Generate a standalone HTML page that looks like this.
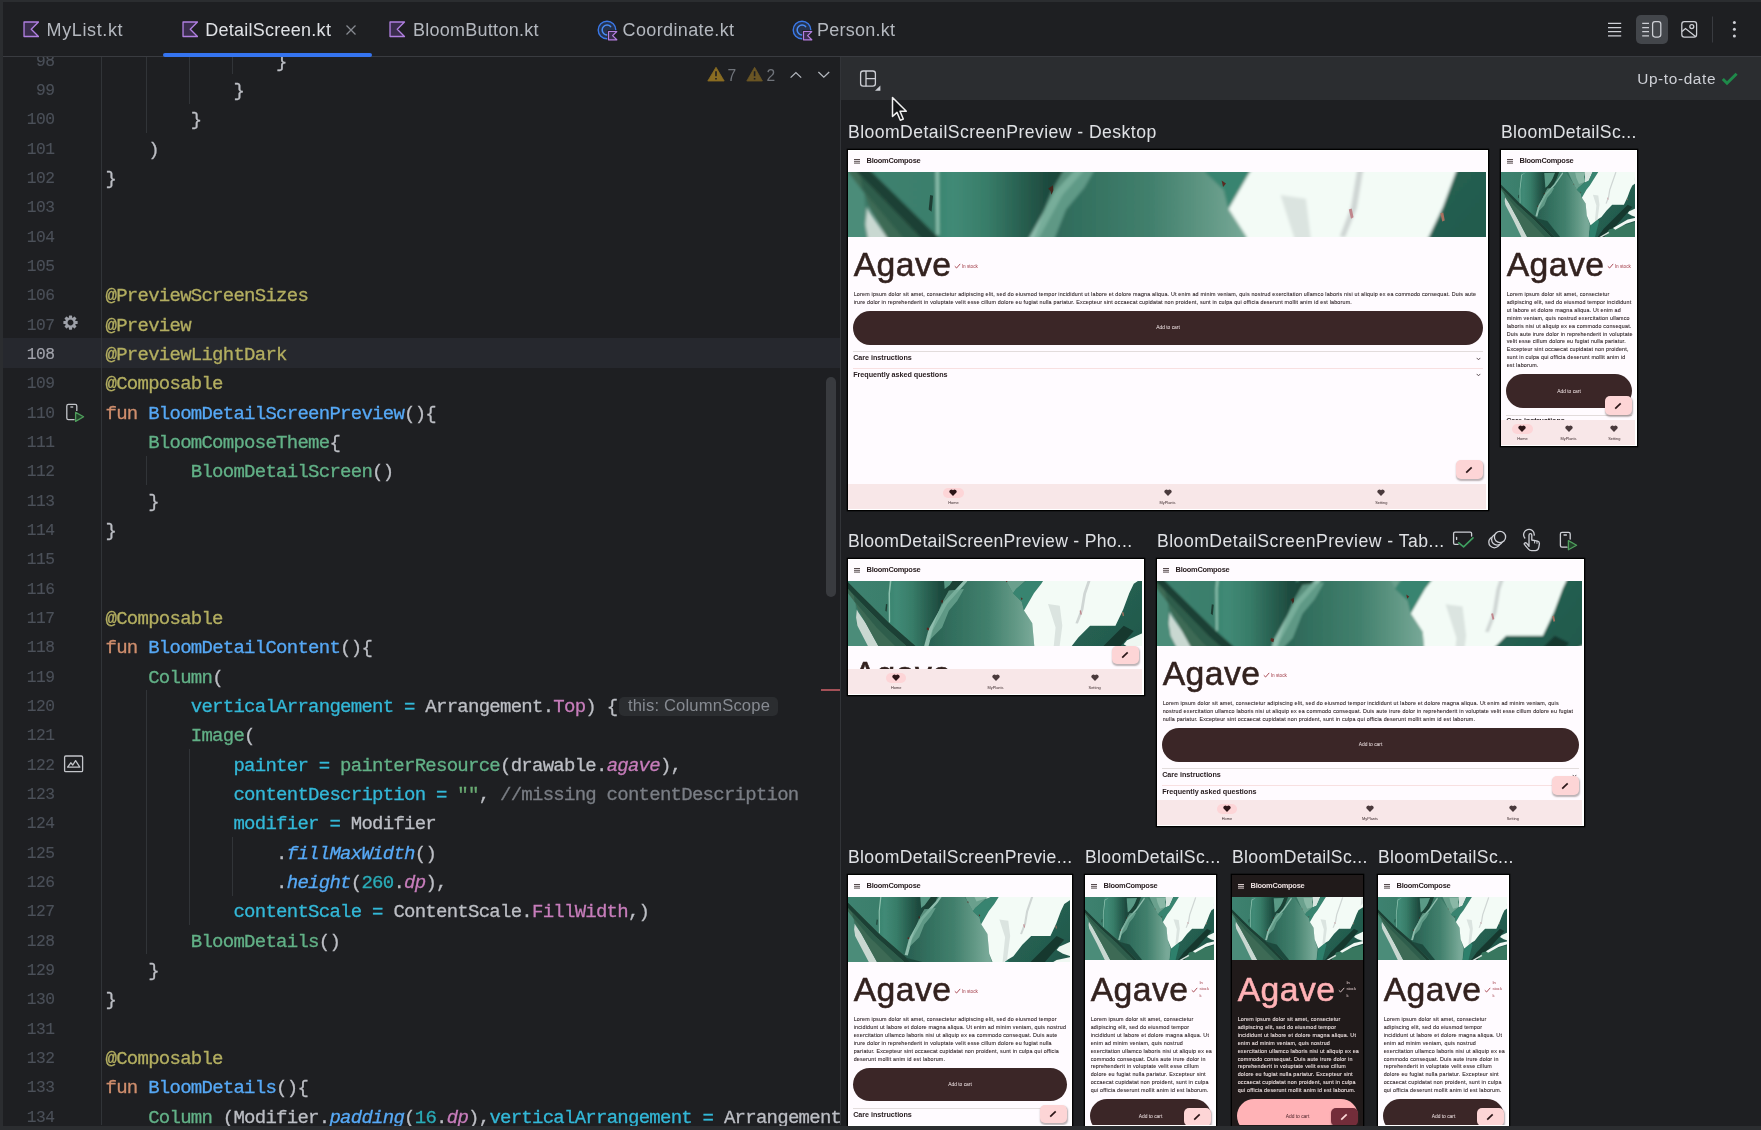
<!DOCTYPE html>
<html><head><meta charset="utf-8"><title>DetailScreen.kt</title>
<style>
html,body{margin:0;padding:0;background:#1e1f22}
#root{will-change:transform;position:relative;width:1761px;height:1130px;overflow:hidden;background:#1e1f22;font-family:"Liberation Sans",sans-serif}
.plab{position:absolute;font-family:"Liberation Sans",sans-serif;font-size:17.6px;letter-spacing:0.41px;color:#dfe1e5;white-space:pre;line-height:22px;margin-top:0.8px}

.ln{position:absolute;left:0;width:54.4px;height:29.33px;line-height:29.33px;text-align:right;font-family:"Liberation Mono",monospace;font-size:17px;letter-spacing:-0.6px;white-space:pre;padding-top:1.8px;-webkit-text-stroke:0.15px;box-sizing:border-box;transform:scaleX(0.955);transform-origin:100% 50%}
.cl{position:absolute;left:105.5px;height:29.33px;line-height:29.33px;font-family:"Liberation Mono",monospace;font-size:19px;letter-spacing:-0.74px;white-space:pre;color:#bcbec4;padding-top:2.7px;-webkit-text-stroke:0.3px;box-sizing:border-box}
.hint{display:inline-block;-webkit-text-stroke:0;font-family:"Liberation Sans",sans-serif;font-size:16.6px;letter-spacing:0.17px;line-height:18.4px;height:18.2px;color:#868a91;background:#2b2d30;border-radius:5px;padding:0 8.2px 0 9.2px;margin-left:1.4px;position:relative;top:-0.6px;vertical-align:baseline}

.tab{position:absolute;top:18.5px;font-family:"Liberation Sans",sans-serif;font-size:18px;letter-spacing:0.26px;white-space:pre;line-height:22px}
.ui{position:absolute;font-family:"Liberation Sans",sans-serif;white-space:pre;line-height:1.2}

.pv{position:absolute;font-family:"Liberation Sans",sans-serif;white-space:pre;line-height:1.2}

</style></head><body>
<div id="root">
<svg width="0" height="0" style="position:absolute"><defs>
<filter id="ab" x="-5%" y="-5%" width="110%" height="110%"><feGaussianBlur stdDeviation="4.5"/></filter>
<filter id="ab2" x="-20%" y="-20%" width="140%" height="140%"><feGaussianBlur stdDeviation="22"/></filter>
<linearGradient id="gA" x1="0" x2="1" y1="0" y2="0"><stop offset="0" stop-color="#3d8270"/><stop offset="1" stop-color="#3a7d6a"/></linearGradient>
<linearGradient id="gB" gradientUnits="userSpaceOnUse" x1="246" x2="600" y1="0" y2="0"><stop offset="0" stop-color="#3a8570"/><stop offset="0.12" stop-color="#418a76"/><stop offset="0.38" stop-color="#387d69"/><stop offset="0.62" stop-color="#2a6353"/><stop offset="0.85" stop-color="#1e4b3f"/><stop offset="1" stop-color="#1b4438"/></linearGradient>
<linearGradient id="gD" gradientUnits="userSpaceOnUse" x1="440" x2="1100" y1="0" y2="0"><stop offset="0" stop-color="#295e50"/><stop offset="0.3" stop-color="#33705f"/><stop offset="0.6" stop-color="#42806d"/><stop offset="0.82" stop-color="#5f9683"/><stop offset="1" stop-color="#78a998"/></linearGradient>
<linearGradient id="gF" x1="0" x2="1" y1="0" y2="1"><stop offset="0" stop-color="#2a6a5a"/><stop offset="1" stop-color="#1f5246"/></linearGradient>
<g id="agaveG">
 <rect x="-20" y="-60" width="1801" height="1240" fill="#3b7866"/>
 <g filter="url(#ab)">
  <!-- leaf A upper-left -->
  <path d="M-20 -60 H330 L255 300 L244 496 L246 674 L66 497 L0 430 L-20 410 Z" fill="url(#gA)"/>
  <!-- far-left lower green -->
  <path d="M-20 440 L45 555 L51 675 L165 900 L270 1120 L300 1190 H-20 Z" fill="#4b8c79"/>
  <!-- whitish streak -->
  <path d="M52 592 L62 610 L106 675 L230 900 L345 1120 L380 1190 H300 L270 1120 L165 900 L56 690 L48 640 Z" fill="#c9d8d1"/>
  <!-- leaf B -->
  <path d="M330 -60 H800 L690 420 L570 550 L480 710 L440 850 L246 674 L244 496 L255 300 Z" fill="url(#gB)"/>
  <path d="M560 280 L700 275 L640 420 L575 470 Z" fill="#5a9a86"/>
  <!-- dark gap -->
  <path d="M720 200 L775 200 L715 370 L650 450 L572 545 L610 440 L690 330 Z" fill="#1a4236"/>
  <!-- central leaf D -->
  <path d="M800 200 Q830 240 840 271 L940 420 L982 496 L1034 546 L1047 598 L1096 674 L1110 830 L1150 950 L1130 1180 H740 L700 1114 L440 850 L480 710 L570 550 L690 420 Z" fill="url(#gD)"/>
  <!-- ridge highlight -->
  <path d="M795 270 L690 420 L570 550 L480 710 L445 840 L470 845 L505 715 L590 560 L705 430 L805 285 Z" fill="#8fbdad"/>
  <path d="M600 480 L561 549 L545 588 L514 674 L480 780 L560 700 L600 600 L650 540 L690 470 Z" fill="#6fa894" opacity="0.75"/>
  <!-- leaf E / sage -->
  <path d="M840 200 H1090 L1075 330 L1090 390 L1000 470 L982 496 L940 420 Z" fill="#6aa08d"/>
  <path d="M960 271 H1085 L1075 330 L1085 395 L1010 420 L975 340 Z" fill="#8ab8a6"/>
  <!-- white upper-left piece -->
  <path d="M1078 200 H1215 L1135 380 L1088 400 L1088 330 Z" fill="#d9e6e0"/>
  <!-- teal gap -->
  <path d="M1215 200 L1300 200 L1150 440 L1106 496 L1047 598 L1034 546 L982 496 L1000 470 L1088 400 L1135 380 Z" fill="#388470"/>
  <!-- dark band (leaf C) -->
  <path d="M-20 410 L0 430 L66 497 L246 674 L470 870 L700 1114 L770 1190 H345 L345 1120 L230 900 L106 675 L56 584 L45 555 L-20 470 Z" fill="#3c6a55"/>
  <path d="M-20 410 L0 430 L66 497 L246 674 L470 870 L700 1114 L770 1190 H725 L655 1114 L432 886 L212 690 L34 506 L-20 448 Z" fill="#1b4034"/>
  <path d="M212 690 L432 886 L655 1114 L725 1190 H640 L575 1114 L370 900 L170 700 L40 545 L34 506 Z" fill="#2f5d4b"/>
  <path d="M450 860 L600 900 L760 1100 L800 1180 H740 L700 1114 Z" fill="#1f4a3e"/>
  <!-- right dark region F -->
  <path d="M1781 385 L1700 440 L1673 496 L1637 593 L1591 690 L1440 690 L1370 760 L1300 850 L1250 880 L1160 955 L1130 1180 H1781 Z" fill="url(#gF)"/>
  <path d="M1160 955 L1250 880 L1270 900 L1200 1180 H1130 Z" fill="#2d806c"/>
  <path d="M1640 690 L1700 720 L1300 1180 H1200 L1330 1000 Z" fill="#16382f"/>
  <path d="M1400 1010 L1781 900 V1180 H1290 Z" fill="#38775f"/>
  <!-- white main leaf -->
  <path d="M1300 200 H1781 V385 L1700 440 L1673 496 L1637 593 L1591 690 L1440 690 L1370 760 L1300 850 L1250 880 L1160 955 L1110 830 L1096 674 L1047 598 L1106 496 L1150 440 Z" fill="#f3fbf6"/>
  <path d="M1190 560 L1260 570 L1275 690 L1250 880 L1215 900 L1235 700 Z" fill="#dbe4e0"/>
  <path d="M1480 265 L1400 496 L1384 593 L1353 674 L1368 676 L1400 596 L1416 500 L1496 268 Z" fill="#cfd6d4"/>
  <path d="M1740 271 L1781 271 V330 L1730 380 Z" fill="#d9dfdd"/>
  <!-- small white highlights lower right -->
  <path d="M1781 720 L1660 775 L1640 800 L1690 830 L1781 860 Z" fill="#eef7f1"/>
  <path d="M1781 850 L1640 880 L1450 990 L1480 1012 L1620 935 L1781 885 Z" fill="#f0f8f3"/>
  <path d="M1390 1040 L1270 1110 L1290 1118 L1402 1056 Z" fill="#cfe0d8"/>
  <!-- thin light edge A/B -->
  <path d="M322 271 L262 300 L241 496 L243 670 L251 670 L250 496 L272 305 Z" fill="#8fc2b0"/>
 </g>
 <!-- spines -->
 <g fill="#5a2a22">
  <path d="M551 542 l13 -9 l1 14 l-5 12 l-3 -10 z" fill="#43251c"/><path d="M470 700 l13 3 l-3 14 l-12 -5 z"/>
  <path d="M226 560 l8 2 l-4 44 l-8 -6 z" fill="#1e3d33"/>
  <path d="M1028 520 l12 8 l-8 10 z"/><path d="M940 415 l10 10 l-10 6 z"/>
  <path d="M1378 600 l8 -3 l5 24 l-7 4 z" fill="#c0868c"/><path d="M1630 610 l8 -2 l4 22 l-7 3 z" fill="#a8705f"/>
 </g>
</g>
</defs></svg>
<div id="editor" style="position:absolute;left:0;top:57px;width:840px;height:1069px;overflow:hidden"><div style="position:absolute;left:0;top:-57px;width:840px;height:1130px">
<div style="position:absolute;left:3px;top:338.30px;width:837px;height:29.33px;background:#26282e"></div>
<div style="position:absolute;left:101px;top:57px;width:1px;height:1068px;background:#313438"></div>
<div style="position:absolute;left:146.3px;top:57.00px;width:1px;height:75.99px;background:#313438"></div>
<div style="position:absolute;left:188.9px;top:57.00px;width:1px;height:46.66px;background:#313438"></div>
<div style="position:absolute;left:231.6px;top:57.00px;width:1px;height:17.33px;background:#313438"></div>
<div style="position:absolute;left:146.3px;top:455.62px;width:1px;height:29.33px;background:#313438"></div>
<div style="position:absolute;left:146.3px;top:690.26px;width:1px;height:263.97px;background:#313438"></div>
<div style="position:absolute;left:188.9px;top:748.92px;width:1px;height:175.98px;background:#313438"></div>
<div style="position:absolute;left:231.6px;top:836.91px;width:1px;height:58.66px;background:#313438"></div>
<div class="ln" style="top:45.00px;color:#4b5059">98</div>
<div class="cl" style="top:45.00px"><span style="color:#bcbec4">                }</span></div>
<div class="ln" style="top:74.33px;color:#4b5059">99</div>
<div class="cl" style="top:74.33px"><span style="color:#bcbec4">            }</span></div>
<div class="ln" style="top:103.66px;color:#4b5059">100</div>
<div class="cl" style="top:103.66px"><span style="color:#bcbec4">        }</span></div>
<div class="ln" style="top:132.99px;color:#4b5059">101</div>
<div class="cl" style="top:132.99px"><span style="color:#bcbec4">    )</span></div>
<div class="ln" style="top:162.32px;color:#4b5059">102</div>
<div class="cl" style="top:162.32px"><span style="color:#bcbec4">}</span></div>
<div class="ln" style="top:191.65px;color:#4b5059">103</div>
<div class="ln" style="top:220.98px;color:#4b5059">104</div>
<div class="ln" style="top:250.31px;color:#4b5059">105</div>
<div class="ln" style="top:279.64px;color:#4b5059">106</div>
<div class="cl" style="top:279.64px"><span style="color:#b3ae60">@PreviewScreenSizes</span></div>
<div class="ln" style="top:308.97px;color:#4b5059">107</div>
<div class="cl" style="top:308.97px"><span style="color:#b3ae60">@Preview</span></div>
<div class="ln" style="top:338.30px;color:#a1a3ab">108</div>
<div class="cl" style="top:338.30px"><span style="color:#b3ae60">@PreviewLightDark</span></div>
<div class="ln" style="top:367.63px;color:#4b5059">109</div>
<div class="cl" style="top:367.63px"><span style="color:#b3ae60">@Composable</span></div>
<div class="ln" style="top:396.96px;color:#4b5059">110</div>
<div class="cl" style="top:396.96px"><span style="color:#cf8e6d">fun </span><span style="color:#56a8f5">BloomDetailScreenPreview</span><span style="color:#bcbec4">(){</span></div>
<div class="ln" style="top:426.29px;color:#4b5059">111</div>
<div class="cl" style="top:426.29px"><span style="color:#62b187">    BloomComposeTheme</span><span style="color:#bcbec4">{</span></div>
<div class="ln" style="top:455.62px;color:#4b5059">112</div>
<div class="cl" style="top:455.62px"><span style="color:#62b187">        BloomDetailScreen</span><span style="color:#bcbec4">()</span></div>
<div class="ln" style="top:484.95px;color:#4b5059">113</div>
<div class="cl" style="top:484.95px"><span style="color:#bcbec4">    }</span></div>
<div class="ln" style="top:514.28px;color:#4b5059">114</div>
<div class="cl" style="top:514.28px"><span style="color:#bcbec4">}</span></div>
<div class="ln" style="top:543.61px;color:#4b5059">115</div>
<div class="ln" style="top:572.94px;color:#4b5059">116</div>
<div class="ln" style="top:602.27px;color:#4b5059">117</div>
<div class="cl" style="top:602.27px"><span style="color:#b3ae60">@Composable</span></div>
<div class="ln" style="top:631.60px;color:#4b5059">118</div>
<div class="cl" style="top:631.60px"><span style="color:#cf8e6d">fun </span><span style="color:#56a8f5">BloomDetailContent</span><span style="color:#bcbec4">(){</span></div>
<div class="ln" style="top:660.93px;color:#4b5059">119</div>
<div class="cl" style="top:660.93px"><span style="color:#62b187">    Column</span><span style="color:#bcbec4">(</span></div>
<div class="ln" style="top:690.26px;color:#4b5059">120</div>
<div class="cl" style="top:690.26px"><span style="color:#33b8d8">        verticalArrangement = </span><span style="color:#bcbec4">Arrangement.</span><span style="color:#c77dbb">Top</span><span style="color:#bcbec4">) {</span><span class="hint">this: ColumnScope</span></div>
<div class="ln" style="top:719.59px;color:#4b5059">121</div>
<div class="cl" style="top:719.59px"><span style="color:#62b187">        Image</span><span style="color:#bcbec4">(</span></div>
<div class="ln" style="top:748.92px;color:#4b5059">122</div>
<div class="cl" style="top:748.92px"><span style="color:#33b8d8">            painter = </span><span style="color:#62b187">painterResource</span><span style="color:#bcbec4">(drawable.</span><span style="color:#c77dbb;font-style:italic">agave</span><span style="color:#bcbec4">),</span></div>
<div class="ln" style="top:778.25px;color:#4b5059">123</div>
<div class="cl" style="top:778.25px"><span style="color:#33b8d8">            contentDescription = </span><span style="color:#6aab73">&quot;&quot;</span><span style="color:#bcbec4">, </span><span style="color:#7a7e85">//missing contentDescription</span></div>
<div class="ln" style="top:807.58px;color:#4b5059">124</div>
<div class="cl" style="top:807.58px"><span style="color:#33b8d8">            modifier = </span><span style="color:#bcbec4">Modifier</span></div>
<div class="ln" style="top:836.91px;color:#4b5059">125</div>
<div class="cl" style="top:836.91px"><span style="color:#bcbec4">                .</span><span style="color:#57aaf7;font-style:italic">fillMaxWidth</span><span style="color:#bcbec4">()</span></div>
<div class="ln" style="top:866.24px;color:#4b5059">126</div>
<div class="cl" style="top:866.24px"><span style="color:#bcbec4">                .</span><span style="color:#57aaf7;font-style:italic">height</span><span style="color:#bcbec4">(</span><span style="color:#2aacb8">260</span><span style="color:#bcbec4">.</span><span style="color:#c77dbb;font-style:italic">dp</span><span style="color:#bcbec4">),</span></div>
<div class="ln" style="top:895.57px;color:#4b5059">127</div>
<div class="cl" style="top:895.57px"><span style="color:#33b8d8">            contentScale = </span><span style="color:#bcbec4">ContentScale.</span><span style="color:#c77dbb">FillWidth</span><span style="color:#bcbec4">,)</span></div>
<div class="ln" style="top:924.90px;color:#4b5059">128</div>
<div class="cl" style="top:924.90px"><span style="color:#62b187">        BloomDetails</span><span style="color:#bcbec4">()</span></div>
<div class="ln" style="top:954.23px;color:#4b5059">129</div>
<div class="cl" style="top:954.23px"><span style="color:#bcbec4">    }</span></div>
<div class="ln" style="top:983.56px;color:#4b5059">130</div>
<div class="cl" style="top:983.56px"><span style="color:#bcbec4">}</span></div>
<div class="ln" style="top:1012.89px;color:#4b5059">131</div>
<div class="ln" style="top:1042.22px;color:#4b5059">132</div>
<div class="cl" style="top:1042.22px"><span style="color:#b3ae60">@Composable</span></div>
<div class="ln" style="top:1071.55px;color:#4b5059">133</div>
<div class="cl" style="top:1071.55px"><span style="color:#cf8e6d">fun </span><span style="color:#56a8f5">BloomDetails</span><span style="color:#bcbec4">(){</span></div>
<div class="ln" style="top:1100.88px;color:#4b5059">134</div>
<div class="cl" style="top:1100.88px"><span style="color:#62b187">    Column </span><span style="color:#bcbec4">(Modifier.</span><span style="color:#57aaf7;font-style:italic">padding</span><span style="color:#bcbec4">(</span><span style="color:#2aacb8">16</span><span style="color:#bcbec4">.</span><span style="color:#c77dbb;font-style:italic">dp</span><span style="color:#bcbec4">),</span><span style="color:#33b8d8">verticalArrangement = </span><span style="color:#bcbec4">Arrangement</span></div>
</div></div>
<div style="position:absolute;left:0;top:0;width:1761px;height:2px;background:#2b2d30"></div>
<div style="position:absolute;left:0;top:0;width:3px;height:1130px;background:#2b2d30"></div>
<div style="position:absolute;left:0;top:1125.7px;width:1761px;height:4.3px;background:#2b2d30;z-index:50"></div>
<div style="position:absolute;left:3px;top:56px;width:1758px;height:1px;background:#393b40"></div>
<svg style="position:absolute;left:22.5px;top:21px" width="16.5" height="16.5" viewBox="0 0 16 16"><path d="M1 1 H15 L8 8 L15 15 H1 Z" fill="#3a2d4d" stroke="#b07fe0" stroke-width="1.3" stroke-linejoin="round"/></svg>
<div class="tab" style="left:46.6px;color:#b4b8bf;letter-spacing:0.62px">MyList.kt</div>
<svg style="position:absolute;left:181.5px;top:21px" width="16.5" height="16.5" viewBox="0 0 16 16"><path d="M1 1 H15 L8 8 L15 15 H1 Z" fill="#3a2d4d" stroke="#b07fe0" stroke-width="1.3" stroke-linejoin="round"/></svg>
<div class="tab" style="left:205.2px;color:#dfe1e5;letter-spacing:0.26px">DetailScreen.kt</div>
<svg style="position:absolute;left:389px;top:21px" width="16.5" height="16.5" viewBox="0 0 16 16"><path d="M1 1 H15 L8 8 L15 15 H1 Z" fill="#3a2d4d" stroke="#b07fe0" stroke-width="1.3" stroke-linejoin="round"/></svg>
<div class="tab" style="left:413px;color:#b4b8bf;letter-spacing:0.26px">BloomButton.kt</div>
<svg style="position:absolute;left:597px;top:19.6px" width="22" height="22" viewBox="0 0 22 22"><circle cx="10" cy="10" r="8.8" fill="#25324d" stroke="#3a78e8" stroke-width="1.4"/><path d="M13.6 6.6 A4.9 4.9 0 1 0 13.6 13.4" fill="none" stroke="#4a8cf5" stroke-width="1.5" stroke-linecap="round"/><rect x="10.2" y="10.2" width="11" height="11" fill="#1e1f22"/><path d="M11.5 11.5 H19.8 L15.6 15.65 L19.8 19.8 H11.5 Z" fill="#3a2d4d" stroke="#b57fe0" stroke-width="1.2" stroke-linejoin="round"/></svg>
<div class="tab" style="left:622.5px;color:#b4b8bf;letter-spacing:0.38px">Coordinate.kt</div>
<svg style="position:absolute;left:791.5px;top:19.6px" width="22" height="22" viewBox="0 0 22 22"><circle cx="10" cy="10" r="8.8" fill="#25324d" stroke="#3a78e8" stroke-width="1.4"/><path d="M13.6 6.6 A4.9 4.9 0 1 0 13.6 13.4" fill="none" stroke="#4a8cf5" stroke-width="1.5" stroke-linecap="round"/><rect x="10.2" y="10.2" width="11" height="11" fill="#1e1f22"/><path d="M11.5 11.5 H19.8 L15.6 15.65 L19.8 19.8 H11.5 Z" fill="#3a2d4d" stroke="#b57fe0" stroke-width="1.2" stroke-linejoin="round"/></svg>
<div class="tab" style="left:817px;color:#b4b8bf;letter-spacing:0.26px">Person.kt</div>
<svg style="position:absolute;left:345px;top:24px" width="12" height="12" viewBox="0 0 12 12"><path d="M1.5 1.5 L10.5 10.5 M10.5 1.5 L1.5 10.5" stroke="#868a91" stroke-width="1.3" fill="none"/></svg>
<div style="position:absolute;left:163px;top:53px;width:209px;height:4px;background:#3574f0;border-radius:2px"></div>
<div style="position:absolute;left:1636px;top:15px;width:32px;height:29px;background:#43464b;border-radius:5px"></div>
<svg style="position:absolute;left:1600px;top:15px" width="150" height="30" viewBox="1600 15 150 30" fill="none" stroke="#ced0d6" stroke-width="1.25"><path d="M1608 23.3 H1621.2 M1608 27.5 H1621.2 M1608 31.7 H1621.2 M1608 35.9 H1621.2"/><path d="M1642.2 23.3 H1649 M1642.2 27.5 H1649 M1642.2 31.7 H1649 M1642.2 35.9 H1649"/><rect x="1652.6" y="21.6" width="8.2" height="15.4" rx="2.4"/><rect x="1681.8" y="21.6" width="14.8" height="15.4" rx="2.6"/><circle cx="1691.8" cy="26.5" r="2"/><path d="M1682 31.5 L1685.5 28.5 L1695.5 36.4"/><path d="M1712.5 16.5 V42.5" stroke="#393b40" stroke-width="1"/><circle cx="1734.4" cy="22.6" r="1.5" fill="#ced0d6" stroke="none"/><circle cx="1734.4" cy="29.3" r="1.5" fill="#ced0d6" stroke="none"/><circle cx="1734.4" cy="36" r="1.5" fill="#ced0d6" stroke="none"/></svg>
<svg style="position:absolute;left:700px;top:60px" width="140" height="30" viewBox="700 60 140 30"><path d="M716 67.3 L724.2 81 H707.8 Z" fill="#8a6d22" stroke="#8a6d22" stroke-width="0.8" stroke-linejoin="round"/><path d="M716 71.2 V76.2 M716 78 V79.6" stroke="#1e1f22" stroke-width="1.6"/><path d="M754.6 67.3 L762.4 81 H746.8 Z" fill="#6a5524" stroke="#6a5524" stroke-width="0.8" stroke-linejoin="round"/><path d="M754.6 71.2 V76.2 M754.6 78 V79.6" stroke="#1e1f22" stroke-width="1.6"/><path d="M790.6 77.6 L795.9 72.6 L801.2 77.6" fill="none" stroke="#b4b8bf" stroke-width="1.3"/><path d="M818.4 72 L823.8 77.2 L829.2 72" fill="none" stroke="#b4b8bf" stroke-width="1.3"/></svg>
<div class="ui" style="left:727.6px;top:67.3px;font-size:15.6px;color:#70747b">7</div>
<div class="ui" style="left:766.6px;top:67.3px;font-size:15.6px;color:#70747b">2</div>
<div style="position:absolute;left:826.4px;top:377px;width:9.2px;height:220px;background:#393b3f;border-radius:5px"></div>
<div style="position:absolute;left:821px;top:689px;width:19px;height:2px;background:#a35057"></div>
<div style="position:absolute;left:840px;top:57px;width:1px;height:1068px;background:#323438"></div>
<div style="position:absolute;left:841px;top:57px;width:920px;height:42.5px;background:#2b2d30"></div>
<svg style="position:absolute;left:855px;top:66px" width="30" height="28" viewBox="855 66 30 28" fill="none" stroke="#ced0d6" stroke-width="1.3"><rect x="860.6" y="71" width="14.8" height="15.2" rx="2.6"/><path d="M866 71 V86.2 M866 78.6 H875.4"/><path d="M880.4 85.6 V90.8 H875 Z" fill="#ced0d6" stroke="none"/></svg>
<div class="ui" style="left:1637.2px;top:70.2px;font-size:15.4px;letter-spacing:0.62px;color:#ced0d6">Up-to-date</div>
<svg style="position:absolute;left:1720px;top:70px" width="20" height="17" viewBox="1720 70 20 17"><path d="M1722.8 79 L1727 83.2 L1736.6 73.8" fill="none" stroke="#1f8a4a" stroke-width="3"/></svg>
<svg style="position:absolute;left:890px;top:96px" width="20" height="28" viewBox="0 0 20 28"><path d="M2.5 1.5 V20.5 L7 16.4 L10.3 24.3 L13.3 23 L10 15.3 H16.3 Z" fill="#141517" stroke="#f0f0f0" stroke-width="1.5" stroke-linejoin="round"/></svg>
<svg style="position:absolute;left:63px;top:315.4px" width="15" height="15" viewBox="-8 -8 16 16"><g fill="#9da0a8"><rect x="-1.7" y="-7.6" width="3.4" height="4" rx="0.6" transform="rotate(0)"/><rect x="-1.7" y="-7.6" width="3.4" height="4" rx="0.6" transform="rotate(45)"/><rect x="-1.7" y="-7.6" width="3.4" height="4" rx="0.6" transform="rotate(90)"/><rect x="-1.7" y="-7.6" width="3.4" height="4" rx="0.6" transform="rotate(135)"/><rect x="-1.7" y="-7.6" width="3.4" height="4" rx="0.6" transform="rotate(180)"/><rect x="-1.7" y="-7.6" width="3.4" height="4" rx="0.6" transform="rotate(225)"/><rect x="-1.7" y="-7.6" width="3.4" height="4" rx="0.6" transform="rotate(270)"/><rect x="-1.7" y="-7.6" width="3.4" height="4" rx="0.6" transform="rotate(315)"/></g><circle r="4.4" fill="none" stroke="#9da0a8" stroke-width="2.4"/></svg>
<svg style="position:absolute;left:64px;top:402px" width="24" height="22" viewBox="64 402 24 22" fill="none"><path d="M74.6 419.6 H68.4 Q66.8 419.6 66.8 418 V406 Q66.8 404.4 68.4 404.4 H75.2 Q76.8 404.4 76.8 406 V411" stroke="#c3c5ca" stroke-width="1.3"/><path d="M70.4 407 H73.2" stroke="#c3c5ca" stroke-width="1.3"/><path d="M75.6 412.4 L83.6 416.8 L75.6 421.4 Z" stroke="#4f9e5c" stroke-width="1.3" fill="#22402a" stroke-linejoin="round"/></svg>
<svg style="position:absolute;left:62px;top:753px" width="24" height="22" viewBox="62 753 24 22" fill="none" stroke="#c3c5ca" stroke-width="1.3"><rect x="64.6" y="756" width="18" height="15.6" rx="1.2"/><path d="M67.6 767.2 L70.8 762.8 L72.8 765 L75.6 760.6 L79.8 767.2 Z" stroke-linejoin="round"/></svg>
<div class="plab" style="left:848px;top:119.8px;letter-spacing:0.45px">BloomDetailScreenPreview - Desktop</div>
<div class="plab" style="left:1501px;top:119.8px;letter-spacing:0.36px">BloomDetailSc...</div>
<div class="plab" style="left:848px;top:528.8px;letter-spacing:0.29px">BloomDetailScreenPreview - Pho...</div>
<div class="plab" style="left:1157px;top:528.8px;letter-spacing:0.49px">BloomDetailScreenPreview - Tab...</div>
<div class="plab" style="left:848px;top:844.8px;letter-spacing:0.36px">BloomDetailScreenPrevie...</div>
<div class="plab" style="left:1085px;top:844.8px;letter-spacing:0.36px">BloomDetailSc...</div>
<div class="plab" style="left:1232px;top:844.8px;letter-spacing:0.36px">BloomDetailSc...</div>
<div class="plab" style="left:1378px;top:844.8px;letter-spacing:0.36px">BloomDetailSc...</div>
<div style="position:absolute;left:847.7px;top:150.2px;width:640.1px;height:360.1px;background:#ffffff;box-shadow:0 0 0 1.3px #000"></div>
<div style="position:absolute;left:848px;top:151px;width:638.2px;height:357.7px;overflow:hidden;background:#fffbff">
<div style="position:absolute;left:0;top:0;width:640px;height:86px;overflow:hidden"><svg width="640" height="400.00" viewBox="0 6.5 1761 1101" preserveAspectRatio="none" style="position:absolute;left:0;top:-157.00px;display:block"><use href="#agaveG"/></svg></div>
<div style="position:absolute;left:0;top:0;width:640px;height:21px;background:#fffbff"></div>
<div style="position:absolute;left:6.2px;top:8.1px;width:6px;height:1.1px;background:#55494c;box-shadow:0 1.8px 0 #55494c,0 3.6px 0 #55494c"></div>
<div class="pv" style="left:18.6px;top:6.4px;font-size:7.45px;font-weight:bold;color:#2b2023;letter-spacing:-0.27px">BloomCompose</div>
<div class="pv" style="left:5.7px;top:93.25px;font-size:33.7px;line-height:40px;letter-spacing:0.45px;color:#33221f;-webkit-text-stroke:0.55px #33221f">Agave</div>
<svg style="position:absolute;left:105.6px;top:111.9px" width="7" height="6" viewBox="0 0 7 6"><path d="M0.8 3.3 L2.6 5 L6.2 0.9" fill="none" stroke="#a03a45" stroke-width="0.9"/></svg>
<div class="pv" style="left:113.7px;top:113.3px;font-size:4.7px;color:#a03a45">In stock</div>
<div class="pv" style="left:5.7px;top:140.15px;font-size:5.35px;letter-spacing:0.199px;line-height:6px;color:#33282b;-webkit-text-stroke:0.1px #33282b">Lorem ipsum dolor sit amet, consectetur adipiscing elit, sed do eiusmod tempor incididunt ut labore et dolore magna aliqua. Ut enim ad minim veniam, quis nostrud exercitation ullamco laboris nisi ut aliquip ex ea commodo consequat. Duis aute</div>
<div class="pv" style="left:5.7px;top:148.04px;font-size:5.35px;letter-spacing:0.199px;line-height:6px;color:#33282b;-webkit-text-stroke:0.1px #33282b">irure dolor in reprehenderit in voluptate velit esse cillum dolore eu fugiat nulla pariatur. Excepteur sint occaecat cupidatat non proident, sunt in culpa qui officia deserunt mollit anim id est laborum.</div>
<div style="position:absolute;left:5px;top:160.09px;width:630px;height:33.6px;border-radius:17px;background:#3b2627"></div>
<div class="pv" style="left:0;width:640px;text-align:center;top:174.49px;font-size:4.9px;line-height:6px;color:#f5e9ea">Add to cart</div>
<div style="position:absolute;left:5px;top:200.49px;width:630px;height:0.8px;background:#e2dcdc"></div>
<div class="pv" style="left:5.2px;top:203.19px;font-size:7.2px;font-weight:bold;color:#2b2023;letter-spacing:-0.03px">Care instructions</div>
<div style="position:absolute;left:5px;top:217.09px;width:630px;height:0.8px;background:#f8e0e1"></div>
<div class="pv" style="left:5.2px;top:220.09px;font-size:7.2px;font-weight:bold;color:#2b2023;letter-spacing:-0.03px">Frequently asked questions</div>
<svg style="position:absolute;left:627.8px;top:205.69px" width="5" height="4" viewBox="0 0 5 4"><path d="M0.7 0.9 L2.5 2.8 L4.3 0.9" fill="none" stroke="#3d3033" stroke-width="0.8"/></svg>
<svg style="position:absolute;left:627.8px;top:222.49px" width="5" height="4" viewBox="0 0 5 4"><path d="M0.7 0.9 L2.5 2.8 L4.3 0.9" fill="none" stroke="#3d3033" stroke-width="0.8"/></svg>
<div style="position:absolute;left:0;top:332.80px;width:640px;height:27px;background:#f8e7e8"></div>
<div style="position:absolute;left:95.27px;top:336.90px;width:20.4px;height:10px;border-radius:5px;background:#fdd5d7"></div>
<svg style="position:absolute;left:101.47px;top:338.40px" width="8.0" height="7.2" viewBox="0 0 16 14.4"><path d="M8 14 L1.6 7.4 A3.7 3.7 0 0 1 8 2.6 A3.7 3.7 0 0 1 14.4 7.4 Z" fill="#2c1517"/></svg>
<div class="pv" style="left:85.47px;width:40px;text-align:center;top:348.90px;font-size:3.9px;line-height:5px;color:#3a2a2c">Home</div>
<svg style="position:absolute;left:315.50px;top:338.40px" width="8.0" height="7.2" viewBox="0 0 16 14.4"><path d="M8 14 L1.6 7.4 A3.7 3.7 0 0 1 8 2.6 A3.7 3.7 0 0 1 14.4 7.4 Z" fill="#4a3a3c"/></svg>
<div class="pv" style="left:299.50px;width:40px;text-align:center;top:348.90px;font-size:3.9px;line-height:5px;color:#3a2a2c">MyPlants</div>
<svg style="position:absolute;left:529.33px;top:338.40px" width="8.0" height="7.2" viewBox="0 0 16 14.4"><path d="M8 14 L1.6 7.4 A3.7 3.7 0 0 1 8 2.6 A3.7 3.7 0 0 1 14.4 7.4 Z" fill="#4a3a3c"/></svg>
<div class="pv" style="left:513.33px;width:40px;text-align:center;top:348.90px;font-size:3.9px;line-height:5px;color:#3a2a2c">Setting</div>
<div style="position:absolute;left:608.00px;top:309.10px;width:27px;height:18.6px;border-radius:5px;background:#fdd5d6;box-shadow:0.6px 1.4px 1.6px rgba(60,40,40,0.35)"></div>
<svg style="position:absolute;left:617.40px;top:314.50px" width="8" height="8" viewBox="0 0 8 8"><path d="M1.2 6.7 L6.7 1.4" stroke="#2a1618" stroke-width="1.7" stroke-linecap="butt"/></svg>
</div>
<div style="position:absolute;left:1500.7px;top:150.2px;width:136.1px;height:296.1px;background:#ffffff;box-shadow:0 0 0 1.3px #000"></div>
<div style="position:absolute;left:1501px;top:151px;width:134.2px;height:293.7px;overflow:hidden;background:#fffbff">
<div style="position:absolute;left:0;top:0;width:136px;height:86px;overflow:hidden"><svg width="136" height="85.00" viewBox="0 6.5 1761 1101" preserveAspectRatio="none" style="position:absolute;left:0;top:0.50px;display:block"><use href="#agaveG"/></svg></div>
<div style="position:absolute;left:0;top:0;width:136px;height:21px;background:#fffbff"></div>
<div style="position:absolute;left:6.2px;top:8.1px;width:6px;height:1.1px;background:#55494c;box-shadow:0 1.8px 0 #55494c,0 3.6px 0 #55494c"></div>
<div class="pv" style="left:18.6px;top:6.4px;font-size:7.45px;font-weight:bold;color:#2b2023;letter-spacing:-0.27px">BloomCompose</div>
<div class="pv" style="left:5.7px;top:93.25px;font-size:33.7px;line-height:40px;letter-spacing:0.45px;color:#33221f;-webkit-text-stroke:0.55px #33221f">Agave</div>
<svg style="position:absolute;left:105.6px;top:111.9px" width="7" height="6" viewBox="0 0 7 6"><path d="M0.8 3.3 L2.6 5 L6.2 0.9" fill="none" stroke="#a03a45" stroke-width="0.9"/></svg>
<div class="pv" style="left:113.7px;top:113.3px;font-size:4.7px;color:#a03a45">In stock</div>
<div class="pv" style="left:5.7px;top:140.15px;font-size:5.35px;letter-spacing:0.199px;line-height:6px;color:#33282b;-webkit-text-stroke:0.1px #33282b">Lorem ipsum dolor sit amet, consectetur</div>
<div class="pv" style="left:5.7px;top:148.04px;font-size:5.35px;letter-spacing:0.199px;line-height:6px;color:#33282b;-webkit-text-stroke:0.1px #33282b">adipiscing elit, sed do eiusmod tempor incididunt</div>
<div class="pv" style="left:5.7px;top:155.93px;font-size:5.35px;letter-spacing:0.199px;line-height:6px;color:#33282b;-webkit-text-stroke:0.1px #33282b">ut labore et dolore magna aliqua. Ut enim ad</div>
<div class="pv" style="left:5.7px;top:163.82px;font-size:5.35px;letter-spacing:0.199px;line-height:6px;color:#33282b;-webkit-text-stroke:0.1px #33282b">minim veniam, quis nostrud exercitation ullamco</div>
<div class="pv" style="left:5.7px;top:171.71px;font-size:5.35px;letter-spacing:0.199px;line-height:6px;color:#33282b;-webkit-text-stroke:0.1px #33282b">laboris nisi ut aliquip ex ea commodo consequat.</div>
<div class="pv" style="left:5.7px;top:179.60px;font-size:5.35px;letter-spacing:0.199px;line-height:6px;color:#33282b;-webkit-text-stroke:0.1px #33282b">Duis aute irure dolor in reprehenderit in voluptate</div>
<div class="pv" style="left:5.7px;top:187.49px;font-size:5.35px;letter-spacing:0.199px;line-height:6px;color:#33282b;-webkit-text-stroke:0.1px #33282b">velit esse cillum dolore eu fugiat nulla pariatur.</div>
<div class="pv" style="left:5.7px;top:195.38px;font-size:5.35px;letter-spacing:0.199px;line-height:6px;color:#33282b;-webkit-text-stroke:0.1px #33282b">Excepteur sint occaecat cupidatat non proident,</div>
<div class="pv" style="left:5.7px;top:203.27px;font-size:5.35px;letter-spacing:0.199px;line-height:6px;color:#33282b;-webkit-text-stroke:0.1px #33282b">sunt in culpa qui officia deserunt mollit anim id</div>
<div class="pv" style="left:5.7px;top:211.16px;font-size:5.35px;letter-spacing:0.199px;line-height:6px;color:#33282b;-webkit-text-stroke:0.1px #33282b">est laborum.</div>
<div style="position:absolute;left:5px;top:223.21px;width:126px;height:33.6px;border-radius:17px;background:#3b2627"></div>
<div class="pv" style="left:0;width:136px;text-align:center;top:237.61px;font-size:4.9px;line-height:6px;color:#f5e9ea">Add to cart</div>
<div style="position:absolute;left:5px;top:263.61px;width:126px;height:0.8px;background:#e2dcdc"></div>
<div class="pv" style="left:5.2px;top:266.31px;font-size:7.2px;font-weight:bold;color:#2b2023;letter-spacing:-0.03px">Care instructions</div>
<div style="position:absolute;left:5px;top:280.21px;width:126px;height:0.8px;background:#f8e0e1"></div>
<div class="pv" style="left:5.2px;top:283.21px;font-size:7.2px;font-weight:bold;color:#2b2023;letter-spacing:-0.03px">Frequently asked questions</div>
<svg style="position:absolute;left:123.8px;top:268.81px" width="5" height="4" viewBox="0 0 5 4"><path d="M0.7 0.9 L2.5 2.8 L4.3 0.9" fill="none" stroke="#3d3033" stroke-width="0.8"/></svg>
<svg style="position:absolute;left:123.8px;top:285.61px" width="5" height="4" viewBox="0 0 5 4"><path d="M0.7 0.9 L2.5 2.8 L4.3 0.9" fill="none" stroke="#3d3033" stroke-width="0.8"/></svg>
<div style="position:absolute;left:0;top:268.80px;width:136px;height:27px;background:#f8e7e8"></div>
<div style="position:absolute;left:11.27px;top:272.90px;width:20.4px;height:10px;border-radius:5px;background:#fdd5d7"></div>
<svg style="position:absolute;left:17.47px;top:274.40px" width="8.0" height="7.2" viewBox="0 0 16 14.4"><path d="M8 14 L1.6 7.4 A3.7 3.7 0 0 1 8 2.6 A3.7 3.7 0 0 1 14.4 7.4 Z" fill="#2c1517"/></svg>
<div class="pv" style="left:1.47px;width:40px;text-align:center;top:284.90px;font-size:3.9px;line-height:5px;color:#3a2a2c">Home</div>
<svg style="position:absolute;left:63.50px;top:274.40px" width="8.0" height="7.2" viewBox="0 0 16 14.4"><path d="M8 14 L1.6 7.4 A3.7 3.7 0 0 1 8 2.6 A3.7 3.7 0 0 1 14.4 7.4 Z" fill="#4a3a3c"/></svg>
<div class="pv" style="left:47.50px;width:40px;text-align:center;top:284.90px;font-size:3.9px;line-height:5px;color:#3a2a2c">MyPlants</div>
<svg style="position:absolute;left:109.33px;top:274.40px" width="8.0" height="7.2" viewBox="0 0 16 14.4"><path d="M8 14 L1.6 7.4 A3.7 3.7 0 0 1 8 2.6 A3.7 3.7 0 0 1 14.4 7.4 Z" fill="#4a3a3c"/></svg>
<div class="pv" style="left:93.33px;width:40px;text-align:center;top:284.90px;font-size:3.9px;line-height:5px;color:#3a2a2c">Setting</div>
<div style="position:absolute;left:104.00px;top:245.10px;width:27px;height:18.6px;border-radius:5px;background:#fdd5d6;box-shadow:0.6px 1.4px 1.6px rgba(60,40,40,0.35)"></div>
<svg style="position:absolute;left:113.40px;top:250.50px" width="8" height="8" viewBox="0 0 8 8"><path d="M1.2 6.7 L6.7 1.4" stroke="#2a1618" stroke-width="1.7" stroke-linecap="butt"/></svg>
</div>
<div style="position:absolute;left:847.7px;top:559.2px;width:296.1px;height:136.1px;background:#ffffff;box-shadow:0 0 0 1.3px #000"></div>
<div style="position:absolute;left:848px;top:560px;width:294.2px;height:133.7px;overflow:hidden;background:#fffbff">
<div style="position:absolute;left:0;top:0;width:296px;height:86px;overflow:hidden"><svg width="296" height="185.00" viewBox="0 6.5 1761 1101" preserveAspectRatio="none" style="position:absolute;left:0;top:-49.50px;display:block"><use href="#agaveG"/></svg></div>
<div style="position:absolute;left:0;top:0;width:296px;height:21px;background:#fffbff"></div>
<div style="position:absolute;left:6.2px;top:8.1px;width:6px;height:1.1px;background:#55494c;box-shadow:0 1.8px 0 #55494c,0 3.6px 0 #55494c"></div>
<div class="pv" style="left:18.6px;top:6.4px;font-size:7.45px;font-weight:bold;color:#2b2023;letter-spacing:-0.27px">BloomCompose</div>
<div class="pv" style="left:5.7px;top:93.25px;font-size:33.7px;line-height:40px;letter-spacing:0.45px;color:#33221f;-webkit-text-stroke:0.55px #33221f">Agave</div>
<svg style="position:absolute;left:105.6px;top:111.9px" width="7" height="6" viewBox="0 0 7 6"><path d="M0.8 3.3 L2.6 5 L6.2 0.9" fill="none" stroke="#a03a45" stroke-width="0.9"/></svg>
<div class="pv" style="left:113.7px;top:113.3px;font-size:4.7px;color:#a03a45">In stock</div>
<div class="pv" style="left:5.7px;top:140.15px;font-size:5.35px;letter-spacing:0.199px;line-height:6px;color:#33282b;-webkit-text-stroke:0.1px #33282b">Lorem ipsum dolor sit amet, consectetur adipiscing elit, sed do eiusmod tempor incididunt ut labore et dolore magna aliqua. Ut enim ad minim veniam, quis nostrud exercitation ullamco laboris nisi ut aliquip ex ea commodo consequat. Duis aute</div>
<div class="pv" style="left:5.7px;top:148.04px;font-size:5.35px;letter-spacing:0.199px;line-height:6px;color:#33282b;-webkit-text-stroke:0.1px #33282b">irure dolor in reprehenderit in voluptate velit esse cillum dolore eu fugiat nulla pariatur. Excepteur sint occaecat cupidatat non proident, sunt in culpa qui officia deserunt mollit anim id est laborum.</div>
<div style="position:absolute;left:5px;top:160.09px;width:286px;height:33.6px;border-radius:17px;background:#3b2627"></div>
<div class="pv" style="left:0;width:296px;text-align:center;top:174.49px;font-size:4.9px;line-height:6px;color:#f5e9ea">Add to cart</div>
<div style="position:absolute;left:5px;top:200.49px;width:286px;height:0.8px;background:#e2dcdc"></div>
<div class="pv" style="left:5.2px;top:203.19px;font-size:7.2px;font-weight:bold;color:#2b2023;letter-spacing:-0.03px">Care instructions</div>
<div style="position:absolute;left:5px;top:217.09px;width:286px;height:0.8px;background:#f8e0e1"></div>
<div class="pv" style="left:5.2px;top:220.09px;font-size:7.2px;font-weight:bold;color:#2b2023;letter-spacing:-0.03px">Frequently asked questions</div>
<svg style="position:absolute;left:283.8px;top:205.69px" width="5" height="4" viewBox="0 0 5 4"><path d="M0.7 0.9 L2.5 2.8 L4.3 0.9" fill="none" stroke="#3d3033" stroke-width="0.8"/></svg>
<svg style="position:absolute;left:283.8px;top:222.49px" width="5" height="4" viewBox="0 0 5 4"><path d="M0.7 0.9 L2.5 2.8 L4.3 0.9" fill="none" stroke="#3d3033" stroke-width="0.8"/></svg>
<div style="position:absolute;left:0;top:108.80px;width:296px;height:27px;background:#f8e7e8"></div>
<div style="position:absolute;left:37.93px;top:112.90px;width:20.4px;height:10px;border-radius:5px;background:#fdd5d7"></div>
<svg style="position:absolute;left:44.13px;top:114.40px" width="8.0" height="7.2" viewBox="0 0 16 14.4"><path d="M8 14 L1.6 7.4 A3.7 3.7 0 0 1 8 2.6 A3.7 3.7 0 0 1 14.4 7.4 Z" fill="#2c1517"/></svg>
<div class="pv" style="left:28.13px;width:40px;text-align:center;top:124.90px;font-size:3.9px;line-height:5px;color:#3a2a2c">Home</div>
<svg style="position:absolute;left:143.50px;top:114.40px" width="8.0" height="7.2" viewBox="0 0 16 14.4"><path d="M8 14 L1.6 7.4 A3.7 3.7 0 0 1 8 2.6 A3.7 3.7 0 0 1 14.4 7.4 Z" fill="#4a3a3c"/></svg>
<div class="pv" style="left:127.50px;width:40px;text-align:center;top:124.90px;font-size:3.9px;line-height:5px;color:#3a2a2c">MyPlants</div>
<svg style="position:absolute;left:242.67px;top:114.40px" width="8.0" height="7.2" viewBox="0 0 16 14.4"><path d="M8 14 L1.6 7.4 A3.7 3.7 0 0 1 8 2.6 A3.7 3.7 0 0 1 14.4 7.4 Z" fill="#4a3a3c"/></svg>
<div class="pv" style="left:226.67px;width:40px;text-align:center;top:124.90px;font-size:3.9px;line-height:5px;color:#3a2a2c">Setting</div>
<div style="position:absolute;left:264.00px;top:86.40px;width:27px;height:17.3px;border-radius:5px;background:#fdd5d6;box-shadow:0.6px 1.4px 1.6px rgba(60,40,40,0.35)"></div>
<svg style="position:absolute;left:273.40px;top:91.15px" width="8" height="8" viewBox="0 0 8 8"><path d="M1.2 6.7 L6.7 1.4" stroke="#2a1618" stroke-width="1.7" stroke-linecap="butt"/></svg>
</div>
<div style="position:absolute;left:1156.7px;top:559.2px;width:427.1px;height:267.1px;background:#ffffff;box-shadow:0 0 0 1.3px #000"></div>
<div style="position:absolute;left:1157px;top:560px;width:425.2px;height:264.7px;overflow:hidden;background:#fffbff">
<div style="position:absolute;left:0;top:0;width:427px;height:86px;overflow:hidden"><svg width="427" height="266.88" viewBox="0 6.5 1761 1101" preserveAspectRatio="none" style="position:absolute;left:0;top:-90.44px;display:block"><use href="#agaveG"/></svg></div>
<div style="position:absolute;left:0;top:0;width:427px;height:21px;background:#fffbff"></div>
<div style="position:absolute;left:6.2px;top:8.1px;width:6px;height:1.1px;background:#55494c;box-shadow:0 1.8px 0 #55494c,0 3.6px 0 #55494c"></div>
<div class="pv" style="left:18.6px;top:6.4px;font-size:7.45px;font-weight:bold;color:#2b2023;letter-spacing:-0.27px">BloomCompose</div>
<div class="pv" style="left:5.7px;top:93.25px;font-size:33.7px;line-height:40px;letter-spacing:0.45px;color:#33221f;-webkit-text-stroke:0.55px #33221f">Agave</div>
<svg style="position:absolute;left:105.6px;top:111.9px" width="7" height="6" viewBox="0 0 7 6"><path d="M0.8 3.3 L2.6 5 L6.2 0.9" fill="none" stroke="#a03a45" stroke-width="0.9"/></svg>
<div class="pv" style="left:113.7px;top:113.3px;font-size:4.7px;color:#a03a45">In stock</div>
<div class="pv" style="left:5.7px;top:140.15px;font-size:5.35px;letter-spacing:0.199px;line-height:6px;color:#33282b;-webkit-text-stroke:0.1px #33282b">Lorem ipsum dolor sit amet, consectetur adipiscing elit, sed do eiusmod tempor incididunt ut labore et dolore magna aliqua. Ut enim ad minim veniam, quis</div>
<div class="pv" style="left:5.7px;top:148.04px;font-size:5.35px;letter-spacing:0.199px;line-height:6px;color:#33282b;-webkit-text-stroke:0.1px #33282b">nostrud exercitation ullamco laboris nisi ut aliquip ex ea commodo consequat. Duis aute irure dolor in reprehenderit in voluptate velit esse cillum dolore eu fugiat</div>
<div class="pv" style="left:5.7px;top:155.93px;font-size:5.35px;letter-spacing:0.199px;line-height:6px;color:#33282b;-webkit-text-stroke:0.1px #33282b">nulla pariatur. Excepteur sint occaecat cupidatat non proident, sunt in culpa qui officia deserunt mollit anim id est laborum.</div>
<div style="position:absolute;left:5px;top:167.98px;width:417px;height:33.6px;border-radius:17px;background:#3b2627"></div>
<div class="pv" style="left:0;width:427px;text-align:center;top:182.38px;font-size:4.9px;line-height:6px;color:#f5e9ea">Add to cart</div>
<div style="position:absolute;left:5px;top:208.38px;width:417px;height:0.8px;background:#e2dcdc"></div>
<div class="pv" style="left:5.2px;top:211.08px;font-size:7.2px;font-weight:bold;color:#2b2023;letter-spacing:-0.03px">Care instructions</div>
<div style="position:absolute;left:5px;top:224.98px;width:417px;height:0.8px;background:#f8e0e1"></div>
<div class="pv" style="left:5.2px;top:227.98px;font-size:7.2px;font-weight:bold;color:#2b2023;letter-spacing:-0.03px">Frequently asked questions</div>
<svg style="position:absolute;left:414.8px;top:213.58px" width="5" height="4" viewBox="0 0 5 4"><path d="M0.7 0.9 L2.5 2.8 L4.3 0.9" fill="none" stroke="#3d3033" stroke-width="0.8"/></svg>
<svg style="position:absolute;left:414.8px;top:230.38px" width="5" height="4" viewBox="0 0 5 4"><path d="M0.7 0.9 L2.5 2.8 L4.3 0.9" fill="none" stroke="#3d3033" stroke-width="0.8"/></svg>
<div style="position:absolute;left:0;top:239.80px;width:427px;height:27px;background:#f8e7e8"></div>
<div style="position:absolute;left:59.77px;top:243.90px;width:20.4px;height:10px;border-radius:5px;background:#fdd5d7"></div>
<svg style="position:absolute;left:65.97px;top:245.40px" width="8.0" height="7.2" viewBox="0 0 16 14.4"><path d="M8 14 L1.6 7.4 A3.7 3.7 0 0 1 8 2.6 A3.7 3.7 0 0 1 14.4 7.4 Z" fill="#2c1517"/></svg>
<div class="pv" style="left:49.97px;width:40px;text-align:center;top:255.90px;font-size:3.9px;line-height:5px;color:#3a2a2c">Home</div>
<svg style="position:absolute;left:209.00px;top:245.40px" width="8.0" height="7.2" viewBox="0 0 16 14.4"><path d="M8 14 L1.6 7.4 A3.7 3.7 0 0 1 8 2.6 A3.7 3.7 0 0 1 14.4 7.4 Z" fill="#4a3a3c"/></svg>
<div class="pv" style="left:193.00px;width:40px;text-align:center;top:255.90px;font-size:3.9px;line-height:5px;color:#3a2a2c">MyPlants</div>
<svg style="position:absolute;left:351.83px;top:245.40px" width="8.0" height="7.2" viewBox="0 0 16 14.4"><path d="M8 14 L1.6 7.4 A3.7 3.7 0 0 1 8 2.6 A3.7 3.7 0 0 1 14.4 7.4 Z" fill="#4a3a3c"/></svg>
<div class="pv" style="left:335.83px;width:40px;text-align:center;top:255.90px;font-size:3.9px;line-height:5px;color:#3a2a2c">Setting</div>
<div style="position:absolute;left:395.00px;top:216.10px;width:27px;height:18.6px;border-radius:5px;background:#fdd5d6;box-shadow:0.6px 1.4px 1.6px rgba(60,40,40,0.35)"></div>
<svg style="position:absolute;left:404.40px;top:221.50px" width="8" height="8" viewBox="0 0 8 8"><path d="M1.2 6.7 L6.7 1.4" stroke="#2a1618" stroke-width="1.7" stroke-linecap="butt"/></svg>
</div>
<div style="position:absolute;left:847.7px;top:875.2px;width:224.1px;height:251px;background:#ffffff;box-shadow:0 0 0 1.3px #000"></div>
<div style="position:absolute;left:848px;top:876px;width:222.2px;height:249px;overflow:hidden;background:#fffbff">
<div style="position:absolute;left:0;top:0;width:224px;height:86px;overflow:hidden"><svg width="224" height="140.00" viewBox="0 6.5 1761 1101" preserveAspectRatio="none" style="position:absolute;left:0;top:-27.00px;display:block"><use href="#agaveG"/></svg></div>
<div style="position:absolute;left:0;top:0;width:224px;height:21px;background:#fffbff"></div>
<div style="position:absolute;left:6.2px;top:8.1px;width:6px;height:1.1px;background:#55494c;box-shadow:0 1.8px 0 #55494c,0 3.6px 0 #55494c"></div>
<div class="pv" style="left:18.6px;top:6.4px;font-size:7.45px;font-weight:bold;color:#2b2023;letter-spacing:-0.27px">BloomCompose</div>
<div class="pv" style="left:5.7px;top:93.25px;font-size:33.7px;line-height:40px;letter-spacing:0.45px;color:#33221f;-webkit-text-stroke:0.55px #33221f">Agave</div>
<svg style="position:absolute;left:105.6px;top:111.9px" width="7" height="6" viewBox="0 0 7 6"><path d="M0.8 3.3 L2.6 5 L6.2 0.9" fill="none" stroke="#a03a45" stroke-width="0.9"/></svg>
<div class="pv" style="left:113.7px;top:113.3px;font-size:4.7px;color:#a03a45">In stock</div>
<div class="pv" style="left:5.7px;top:140.15px;font-size:5.35px;letter-spacing:0.199px;line-height:6px;color:#33282b;-webkit-text-stroke:0.1px #33282b">Lorem ipsum dolor sit amet, consectetur adipiscing elit, sed do eiusmod tempor</div>
<div class="pv" style="left:5.7px;top:148.04px;font-size:5.35px;letter-spacing:0.199px;line-height:6px;color:#33282b;-webkit-text-stroke:0.1px #33282b">incididunt ut labore et dolore magna aliqua. Ut enim ad minim veniam, quis nostrud</div>
<div class="pv" style="left:5.7px;top:155.93px;font-size:5.35px;letter-spacing:0.199px;line-height:6px;color:#33282b;-webkit-text-stroke:0.1px #33282b">exercitation ullamco laboris nisi ut aliquip ex ea commodo consequat. Duis aute</div>
<div class="pv" style="left:5.7px;top:163.82px;font-size:5.35px;letter-spacing:0.199px;line-height:6px;color:#33282b;-webkit-text-stroke:0.1px #33282b">irure dolor in reprehenderit in voluptate velit esse cillum dolore eu fugiat nulla</div>
<div class="pv" style="left:5.7px;top:171.71px;font-size:5.35px;letter-spacing:0.199px;line-height:6px;color:#33282b;-webkit-text-stroke:0.1px #33282b">pariatur. Excepteur sint occaecat cupidatat non proident, sunt in culpa qui officia</div>
<div class="pv" style="left:5.7px;top:179.60px;font-size:5.35px;letter-spacing:0.199px;line-height:6px;color:#33282b;-webkit-text-stroke:0.1px #33282b">deserunt mollit anim id est laborum.</div>
<div style="position:absolute;left:5px;top:191.65px;width:214px;height:33.6px;border-radius:17px;background:#3b2627"></div>
<div class="pv" style="left:0;width:224px;text-align:center;top:206.05px;font-size:4.9px;line-height:6px;color:#f5e9ea">Add to cart</div>
<div style="position:absolute;left:5px;top:232.05px;width:214px;height:0.8px;background:#e2dcdc"></div>
<div class="pv" style="left:5.2px;top:234.75px;font-size:7.2px;font-weight:bold;color:#2b2023;letter-spacing:-0.03px">Care instructions</div>
<div style="position:absolute;left:5px;top:248.65px;width:214px;height:0.8px;background:#f8e0e1"></div>
<div class="pv" style="left:5.2px;top:251.65px;font-size:7.2px;font-weight:bold;color:#2b2023;letter-spacing:-0.03px">Frequently asked questions</div>
<svg style="position:absolute;left:211.8px;top:237.25px" width="5" height="4" viewBox="0 0 5 4"><path d="M0.7 0.9 L2.5 2.8 L4.3 0.9" fill="none" stroke="#3d3033" stroke-width="0.8"/></svg>
<svg style="position:absolute;left:211.8px;top:254.05px" width="5" height="4" viewBox="0 0 5 4"><path d="M0.7 0.9 L2.5 2.8 L4.3 0.9" fill="none" stroke="#3d3033" stroke-width="0.8"/></svg>
<div style="position:absolute;left:0;top:252.60px;width:224px;height:27px;background:#f8e7e8"></div>
<div style="position:absolute;left:25.93px;top:256.70px;width:20.4px;height:10px;border-radius:5px;background:#fdd5d7"></div>
<svg style="position:absolute;left:32.13px;top:258.20px" width="8.0" height="7.2" viewBox="0 0 16 14.4"><path d="M8 14 L1.6 7.4 A3.7 3.7 0 0 1 8 2.6 A3.7 3.7 0 0 1 14.4 7.4 Z" fill="#2c1517"/></svg>
<div class="pv" style="left:16.13px;width:40px;text-align:center;top:268.70px;font-size:3.9px;line-height:5px;color:#3a2a2c">Home</div>
<svg style="position:absolute;left:107.50px;top:258.20px" width="8.0" height="7.2" viewBox="0 0 16 14.4"><path d="M8 14 L1.6 7.4 A3.7 3.7 0 0 1 8 2.6 A3.7 3.7 0 0 1 14.4 7.4 Z" fill="#4a3a3c"/></svg>
<div class="pv" style="left:91.50px;width:40px;text-align:center;top:268.70px;font-size:3.9px;line-height:5px;color:#3a2a2c">MyPlants</div>
<svg style="position:absolute;left:182.67px;top:258.20px" width="8.0" height="7.2" viewBox="0 0 16 14.4"><path d="M8 14 L1.6 7.4 A3.7 3.7 0 0 1 8 2.6 A3.7 3.7 0 0 1 14.4 7.4 Z" fill="#4a3a3c"/></svg>
<div class="pv" style="left:166.67px;width:40px;text-align:center;top:268.70px;font-size:3.9px;line-height:5px;color:#3a2a2c">Setting</div>
<div style="position:absolute;left:192.00px;top:228.90px;width:27px;height:18.6px;border-radius:5px;background:#fdd5d6;box-shadow:0.6px 1.4px 1.6px rgba(60,40,40,0.35)"></div>
<svg style="position:absolute;left:201.40px;top:234.30px" width="8" height="8" viewBox="0 0 8 8"><path d="M1.2 6.7 L6.7 1.4" stroke="#2a1618" stroke-width="1.7" stroke-linecap="butt"/></svg>
</div>
<div style="position:absolute;left:1084.7px;top:875.2px;width:131.1px;height:251px;background:#ffffff;box-shadow:0 0 0 1.3px #000"></div>
<div style="position:absolute;left:1085px;top:876px;width:129.2px;height:249px;overflow:hidden;background:#fffbff">
<div style="position:absolute;left:0;top:0;width:131px;height:86px;overflow:hidden"><svg width="131" height="81.88" viewBox="0 6.5 1761 1101" preserveAspectRatio="none" style="position:absolute;left:0;top:2.06px;display:block"><use href="#agaveG"/></svg></div>
<div style="position:absolute;left:0;top:0;width:131px;height:21px;background:#fffbff"></div>
<div style="position:absolute;left:6.2px;top:8.1px;width:6px;height:1.1px;background:#55494c;box-shadow:0 1.8px 0 #55494c,0 3.6px 0 #55494c"></div>
<div class="pv" style="left:18.6px;top:6.4px;font-size:7.45px;font-weight:bold;color:#2b2023;letter-spacing:-0.27px">BloomCompose</div>
<div class="pv" style="left:5.7px;top:93.25px;font-size:33.7px;line-height:40px;letter-spacing:0.45px;color:#33221f;-webkit-text-stroke:0.55px #33221f">Agave</div>
<svg style="position:absolute;left:105.6px;top:110.6px" width="7" height="6" viewBox="0 0 7 6"><path d="M0.8 3.3 L2.6 5 L6.2 0.9" fill="none" stroke="#a03a45" stroke-width="0.9"/></svg>
<div class="pv" style="left:114.4px;top:103.7px;font-size:4.1px;line-height:6.6px;color:#a03a45">In<br>stock<br>k</div>
<div class="pv" style="left:5.7px;top:140.15px;font-size:5.35px;letter-spacing:0.199px;line-height:6px;color:#33282b;-webkit-text-stroke:0.1px #33282b">Lorem ipsum dolor sit amet, consectetur</div>
<div class="pv" style="left:5.7px;top:148.04px;font-size:5.35px;letter-spacing:0.199px;line-height:6px;color:#33282b;-webkit-text-stroke:0.1px #33282b">adipiscing elit, sed do eiusmod tempor</div>
<div class="pv" style="left:5.7px;top:155.93px;font-size:5.35px;letter-spacing:0.199px;line-height:6px;color:#33282b;-webkit-text-stroke:0.1px #33282b">incididunt ut labore et dolore magna aliqua. Ut</div>
<div class="pv" style="left:5.7px;top:163.82px;font-size:5.35px;letter-spacing:0.199px;line-height:6px;color:#33282b;-webkit-text-stroke:0.1px #33282b">enim ad minim veniam, quis nostrud</div>
<div class="pv" style="left:5.7px;top:171.71px;font-size:5.35px;letter-spacing:0.199px;line-height:6px;color:#33282b;-webkit-text-stroke:0.1px #33282b">exercitation ullamco laboris nisi ut aliquip ex ea</div>
<div class="pv" style="left:5.7px;top:179.60px;font-size:5.35px;letter-spacing:0.199px;line-height:6px;color:#33282b;-webkit-text-stroke:0.1px #33282b">commodo consequat. Duis aute irure dolor in</div>
<div class="pv" style="left:5.7px;top:187.49px;font-size:5.35px;letter-spacing:0.199px;line-height:6px;color:#33282b;-webkit-text-stroke:0.1px #33282b">reprehenderit in voluptate velit esse cillum</div>
<div class="pv" style="left:5.7px;top:195.38px;font-size:5.35px;letter-spacing:0.199px;line-height:6px;color:#33282b;-webkit-text-stroke:0.1px #33282b">dolore eu fugiat nulla pariatur. Excepteur sint</div>
<div class="pv" style="left:5.7px;top:203.27px;font-size:5.35px;letter-spacing:0.199px;line-height:6px;color:#33282b;-webkit-text-stroke:0.1px #33282b">occaecat cupidatat non proident, sunt in culpa</div>
<div class="pv" style="left:5.7px;top:211.16px;font-size:5.35px;letter-spacing:0.199px;line-height:6px;color:#33282b;-webkit-text-stroke:0.1px #33282b">qui officia deserunt mollit anim id est laborum.</div>
<div style="position:absolute;left:5px;top:223.21px;width:121px;height:33.6px;border-radius:17px;background:#3b2627"></div>
<div class="pv" style="left:0;width:131px;text-align:center;top:237.61px;font-size:4.9px;line-height:6px;color:#f5e9ea">Add to cart</div>
<div style="position:absolute;left:5px;top:263.61px;width:121px;height:0.8px;background:#e2dcdc"></div>
<div class="pv" style="left:5.2px;top:266.31px;font-size:7.2px;font-weight:bold;color:#2b2023;letter-spacing:-0.03px">Care instructions</div>
<div style="position:absolute;left:5px;top:280.21px;width:121px;height:0.8px;background:#f8e0e1"></div>
<div class="pv" style="left:5.2px;top:283.21px;font-size:7.2px;font-weight:bold;color:#2b2023;letter-spacing:-0.03px">Frequently asked questions</div>
<svg style="position:absolute;left:118.8px;top:268.81px" width="5" height="4" viewBox="0 0 5 4"><path d="M0.7 0.9 L2.5 2.8 L4.3 0.9" fill="none" stroke="#3d3033" stroke-width="0.8"/></svg>
<svg style="position:absolute;left:118.8px;top:285.61px" width="5" height="4" viewBox="0 0 5 4"><path d="M0.7 0.9 L2.5 2.8 L4.3 0.9" fill="none" stroke="#3d3033" stroke-width="0.8"/></svg>
<div style="position:absolute;left:0;top:255.20px;width:131px;height:27px;background:#f8e7e8"></div>
<div style="position:absolute;left:10.43px;top:259.30px;width:20.4px;height:10px;border-radius:5px;background:#fdd5d7"></div>
<svg style="position:absolute;left:16.63px;top:260.80px" width="8.0" height="7.2" viewBox="0 0 16 14.4"><path d="M8 14 L1.6 7.4 A3.7 3.7 0 0 1 8 2.6 A3.7 3.7 0 0 1 14.4 7.4 Z" fill="#2c1517"/></svg>
<div class="pv" style="left:0.63px;width:40px;text-align:center;top:271.30px;font-size:3.9px;line-height:5px;color:#3a2a2c">Home</div>
<svg style="position:absolute;left:61.00px;top:260.80px" width="8.0" height="7.2" viewBox="0 0 16 14.4"><path d="M8 14 L1.6 7.4 A3.7 3.7 0 0 1 8 2.6 A3.7 3.7 0 0 1 14.4 7.4 Z" fill="#4a3a3c"/></svg>
<div class="pv" style="left:45.00px;width:40px;text-align:center;top:271.30px;font-size:3.9px;line-height:5px;color:#3a2a2c">MyPlants</div>
<svg style="position:absolute;left:105.17px;top:260.80px" width="8.0" height="7.2" viewBox="0 0 16 14.4"><path d="M8 14 L1.6 7.4 A3.7 3.7 0 0 1 8 2.6 A3.7 3.7 0 0 1 14.4 7.4 Z" fill="#4a3a3c"/></svg>
<div class="pv" style="left:89.17px;width:40px;text-align:center;top:271.30px;font-size:3.9px;line-height:5px;color:#3a2a2c">Setting</div>
<div style="position:absolute;left:99.00px;top:231.50px;width:27px;height:18.6px;border-radius:5px;background:#fdd5d6;box-shadow:0.6px 1.4px 1.6px rgba(60,40,40,0.35)"></div>
<svg style="position:absolute;left:108.40px;top:236.90px" width="8" height="8" viewBox="0 0 8 8"><path d="M1.2 6.7 L6.7 1.4" stroke="#2a1618" stroke-width="1.7" stroke-linecap="butt"/></svg>
</div>
<div style="position:absolute;left:1231.7px;top:875.2px;width:131.1px;height:251px;background:#201a1a;box-shadow:0 0 0 1.3px #000"></div>
<div style="position:absolute;left:1232px;top:876px;width:130.7px;height:249px;overflow:hidden;background:#201a1a">
<div style="position:absolute;left:0;top:0;width:131px;height:86px;overflow:hidden"><svg width="131" height="81.88" viewBox="0 6.5 1761 1101" preserveAspectRatio="none" style="position:absolute;left:0;top:2.06px;display:block"><use href="#agaveG"/></svg></div>
<div style="position:absolute;left:0;top:0;width:131px;height:21px;background:#201a1a"></div>
<div style="position:absolute;left:6.2px;top:8.1px;width:6px;height:1.1px;background:#d9cccd;box-shadow:0 1.8px 0 #d9cccd,0 3.6px 0 #d9cccd"></div>
<div class="pv" style="left:18.6px;top:6.4px;font-size:7.45px;font-weight:bold;color:#ece0e0;letter-spacing:-0.27px">BloomCompose</div>
<div class="pv" style="left:5.7px;top:93.25px;font-size:33.7px;line-height:40px;letter-spacing:0.45px;color:#ffb2b6;-webkit-text-stroke:0.55px #ffb2b6">Agave</div>
<svg style="position:absolute;left:105.6px;top:110.6px" width="7" height="6" viewBox="0 0 7 6"><path d="M0.8 3.3 L2.6 5 L6.2 0.9" fill="none" stroke="#e6d0d1" stroke-width="0.9"/></svg>
<div class="pv" style="left:114.4px;top:103.7px;font-size:4.1px;line-height:6.6px;color:#e6d0d1">In<br>stock<br>k</div>
<div class="pv" style="left:5.7px;top:140.15px;font-size:5.35px;letter-spacing:0.199px;line-height:6px;color:#ece0e0;-webkit-text-stroke:0.1px #ece0e0">Lorem ipsum dolor sit amet, consectetur</div>
<div class="pv" style="left:5.7px;top:148.04px;font-size:5.35px;letter-spacing:0.199px;line-height:6px;color:#ece0e0;-webkit-text-stroke:0.1px #ece0e0">adipiscing elit, sed do eiusmod tempor</div>
<div class="pv" style="left:5.7px;top:155.93px;font-size:5.35px;letter-spacing:0.199px;line-height:6px;color:#ece0e0;-webkit-text-stroke:0.1px #ece0e0">incididunt ut labore et dolore magna aliqua. Ut</div>
<div class="pv" style="left:5.7px;top:163.82px;font-size:5.35px;letter-spacing:0.199px;line-height:6px;color:#ece0e0;-webkit-text-stroke:0.1px #ece0e0">enim ad minim veniam, quis nostrud</div>
<div class="pv" style="left:5.7px;top:171.71px;font-size:5.35px;letter-spacing:0.199px;line-height:6px;color:#ece0e0;-webkit-text-stroke:0.1px #ece0e0">exercitation ullamco laboris nisi ut aliquip ex ea</div>
<div class="pv" style="left:5.7px;top:179.60px;font-size:5.35px;letter-spacing:0.199px;line-height:6px;color:#ece0e0;-webkit-text-stroke:0.1px #ece0e0">commodo consequat. Duis aute irure dolor in</div>
<div class="pv" style="left:5.7px;top:187.49px;font-size:5.35px;letter-spacing:0.199px;line-height:6px;color:#ece0e0;-webkit-text-stroke:0.1px #ece0e0">reprehenderit in voluptate velit esse cillum</div>
<div class="pv" style="left:5.7px;top:195.38px;font-size:5.35px;letter-spacing:0.199px;line-height:6px;color:#ece0e0;-webkit-text-stroke:0.1px #ece0e0">dolore eu fugiat nulla pariatur. Excepteur sint</div>
<div class="pv" style="left:5.7px;top:203.27px;font-size:5.35px;letter-spacing:0.199px;line-height:6px;color:#ece0e0;-webkit-text-stroke:0.1px #ece0e0">occaecat cupidatat non proident, sunt in culpa</div>
<div class="pv" style="left:5.7px;top:211.16px;font-size:5.35px;letter-spacing:0.199px;line-height:6px;color:#ece0e0;-webkit-text-stroke:0.1px #ece0e0">qui officia deserunt mollit anim id est laborum.</div>
<div style="position:absolute;left:5px;top:223.21px;width:121px;height:33.6px;border-radius:17px;background:#ffb2b6"></div>
<div class="pv" style="left:0;width:131px;text-align:center;top:237.61px;font-size:4.9px;line-height:6px;color:#4a2228">Add to cart</div>
<div style="position:absolute;left:5px;top:263.61px;width:121px;height:0.8px;background:#3a3031"></div>
<div class="pv" style="left:5.2px;top:266.31px;font-size:7.2px;font-weight:bold;color:#ece0e0;letter-spacing:-0.03px">Care instructions</div>
<div style="position:absolute;left:5px;top:280.21px;width:121px;height:0.8px;background:#4b3034"></div>
<div class="pv" style="left:5.2px;top:283.21px;font-size:7.2px;font-weight:bold;color:#ece0e0;letter-spacing:-0.03px">Frequently asked questions</div>
<svg style="position:absolute;left:118.8px;top:268.81px" width="5" height="4" viewBox="0 0 5 4"><path d="M0.7 0.9 L2.5 2.8 L4.3 0.9" fill="none" stroke="#ece0e0" stroke-width="0.8"/></svg>
<svg style="position:absolute;left:118.8px;top:285.61px" width="5" height="4" viewBox="0 0 5 4"><path d="M0.7 0.9 L2.5 2.8 L4.3 0.9" fill="none" stroke="#ece0e0" stroke-width="0.8"/></svg>
<div style="position:absolute;left:0;top:255.20px;width:131px;height:27px;background:#2e2526"></div>
<div style="position:absolute;left:10.43px;top:259.30px;width:20.4px;height:10px;border-radius:5px;background:#5c3038"></div>
<svg style="position:absolute;left:16.63px;top:260.80px" width="8.0" height="7.2" viewBox="0 0 16 14.4"><path d="M8 14 L1.6 7.4 A3.7 3.7 0 0 1 8 2.6 A3.7 3.7 0 0 1 14.4 7.4 Z" fill="#ffd9da"/></svg>
<div class="pv" style="left:0.63px;width:40px;text-align:center;top:271.30px;font-size:3.9px;line-height:5px;color:#ece0e0">Home</div>
<svg style="position:absolute;left:61.00px;top:260.80px" width="8.0" height="7.2" viewBox="0 0 16 14.4"><path d="M8 14 L1.6 7.4 A3.7 3.7 0 0 1 8 2.6 A3.7 3.7 0 0 1 14.4 7.4 Z" fill="#d0c4c5"/></svg>
<div class="pv" style="left:45.00px;width:40px;text-align:center;top:271.30px;font-size:3.9px;line-height:5px;color:#ece0e0">MyPlants</div>
<svg style="position:absolute;left:105.17px;top:260.80px" width="8.0" height="7.2" viewBox="0 0 16 14.4"><path d="M8 14 L1.6 7.4 A3.7 3.7 0 0 1 8 2.6 A3.7 3.7 0 0 1 14.4 7.4 Z" fill="#d0c4c5"/></svg>
<div class="pv" style="left:89.17px;width:40px;text-align:center;top:271.30px;font-size:3.9px;line-height:5px;color:#ece0e0">Setting</div>
<div style="position:absolute;left:99.00px;top:231.50px;width:27px;height:18.6px;border-radius:5px;background:#732d3a;box-shadow:0.6px 1.4px 1.6px rgba(60,40,40,0.35)"></div>
<svg style="position:absolute;left:108.40px;top:236.90px" width="8" height="8" viewBox="0 0 8 8"><path d="M1.2 6.7 L6.7 1.4" stroke="#ffd9da" stroke-width="1.7" stroke-linecap="butt"/></svg>
</div>
<div style="position:absolute;left:1377.7px;top:875.2px;width:131.1px;height:251px;background:#ffffff;box-shadow:0 0 0 1.3px #000"></div>
<div style="position:absolute;left:1378px;top:876px;width:129.2px;height:249px;overflow:hidden;background:#fffbff">
<div style="position:absolute;left:0;top:0;width:131px;height:86px;overflow:hidden"><svg width="131" height="81.88" viewBox="0 6.5 1761 1101" preserveAspectRatio="none" style="position:absolute;left:0;top:2.06px;display:block"><use href="#agaveG"/></svg></div>
<div style="position:absolute;left:0;top:0;width:131px;height:21px;background:#fffbff"></div>
<div style="position:absolute;left:6.2px;top:8.1px;width:6px;height:1.1px;background:#55494c;box-shadow:0 1.8px 0 #55494c,0 3.6px 0 #55494c"></div>
<div class="pv" style="left:18.6px;top:6.4px;font-size:7.45px;font-weight:bold;color:#2b2023;letter-spacing:-0.27px">BloomCompose</div>
<div class="pv" style="left:5.7px;top:93.25px;font-size:33.7px;line-height:40px;letter-spacing:0.45px;color:#33221f;-webkit-text-stroke:0.55px #33221f">Agave</div>
<svg style="position:absolute;left:105.6px;top:110.6px" width="7" height="6" viewBox="0 0 7 6"><path d="M0.8 3.3 L2.6 5 L6.2 0.9" fill="none" stroke="#a03a45" stroke-width="0.9"/></svg>
<div class="pv" style="left:114.4px;top:103.7px;font-size:4.1px;line-height:6.6px;color:#a03a45">In<br>stock<br>k</div>
<div class="pv" style="left:5.7px;top:140.15px;font-size:5.35px;letter-spacing:0.199px;line-height:6px;color:#33282b;-webkit-text-stroke:0.1px #33282b">Lorem ipsum dolor sit amet, consectetur</div>
<div class="pv" style="left:5.7px;top:148.04px;font-size:5.35px;letter-spacing:0.199px;line-height:6px;color:#33282b;-webkit-text-stroke:0.1px #33282b">adipiscing elit, sed do eiusmod tempor</div>
<div class="pv" style="left:5.7px;top:155.93px;font-size:5.35px;letter-spacing:0.199px;line-height:6px;color:#33282b;-webkit-text-stroke:0.1px #33282b">incididunt ut labore et dolore magna aliqua. Ut</div>
<div class="pv" style="left:5.7px;top:163.82px;font-size:5.35px;letter-spacing:0.199px;line-height:6px;color:#33282b;-webkit-text-stroke:0.1px #33282b">enim ad minim veniam, quis nostrud</div>
<div class="pv" style="left:5.7px;top:171.71px;font-size:5.35px;letter-spacing:0.199px;line-height:6px;color:#33282b;-webkit-text-stroke:0.1px #33282b">exercitation ullamco laboris nisi ut aliquip ex ea</div>
<div class="pv" style="left:5.7px;top:179.60px;font-size:5.35px;letter-spacing:0.199px;line-height:6px;color:#33282b;-webkit-text-stroke:0.1px #33282b">commodo consequat. Duis aute irure dolor in</div>
<div class="pv" style="left:5.7px;top:187.49px;font-size:5.35px;letter-spacing:0.199px;line-height:6px;color:#33282b;-webkit-text-stroke:0.1px #33282b">reprehenderit in voluptate velit esse cillum</div>
<div class="pv" style="left:5.7px;top:195.38px;font-size:5.35px;letter-spacing:0.199px;line-height:6px;color:#33282b;-webkit-text-stroke:0.1px #33282b">dolore eu fugiat nulla pariatur. Excepteur sint</div>
<div class="pv" style="left:5.7px;top:203.27px;font-size:5.35px;letter-spacing:0.199px;line-height:6px;color:#33282b;-webkit-text-stroke:0.1px #33282b">occaecat cupidatat non proident, sunt in culpa</div>
<div class="pv" style="left:5.7px;top:211.16px;font-size:5.35px;letter-spacing:0.199px;line-height:6px;color:#33282b;-webkit-text-stroke:0.1px #33282b">qui officia deserunt mollit anim id est laborum.</div>
<div style="position:absolute;left:5px;top:223.21px;width:121px;height:33.6px;border-radius:17px;background:#3b2627"></div>
<div class="pv" style="left:0;width:131px;text-align:center;top:237.61px;font-size:4.9px;line-height:6px;color:#f5e9ea">Add to cart</div>
<div style="position:absolute;left:5px;top:263.61px;width:121px;height:0.8px;background:#e2dcdc"></div>
<div class="pv" style="left:5.2px;top:266.31px;font-size:7.2px;font-weight:bold;color:#2b2023;letter-spacing:-0.03px">Care instructions</div>
<div style="position:absolute;left:5px;top:280.21px;width:121px;height:0.8px;background:#f8e0e1"></div>
<div class="pv" style="left:5.2px;top:283.21px;font-size:7.2px;font-weight:bold;color:#2b2023;letter-spacing:-0.03px">Frequently asked questions</div>
<svg style="position:absolute;left:118.8px;top:268.81px" width="5" height="4" viewBox="0 0 5 4"><path d="M0.7 0.9 L2.5 2.8 L4.3 0.9" fill="none" stroke="#3d3033" stroke-width="0.8"/></svg>
<svg style="position:absolute;left:118.8px;top:285.61px" width="5" height="4" viewBox="0 0 5 4"><path d="M0.7 0.9 L2.5 2.8 L4.3 0.9" fill="none" stroke="#3d3033" stroke-width="0.8"/></svg>
<div style="position:absolute;left:0;top:255.20px;width:131px;height:27px;background:#f8e7e8"></div>
<div style="position:absolute;left:10.43px;top:259.30px;width:20.4px;height:10px;border-radius:5px;background:#fdd5d7"></div>
<svg style="position:absolute;left:16.63px;top:260.80px" width="8.0" height="7.2" viewBox="0 0 16 14.4"><path d="M8 14 L1.6 7.4 A3.7 3.7 0 0 1 8 2.6 A3.7 3.7 0 0 1 14.4 7.4 Z" fill="#2c1517"/></svg>
<div class="pv" style="left:0.63px;width:40px;text-align:center;top:271.30px;font-size:3.9px;line-height:5px;color:#3a2a2c">Home</div>
<svg style="position:absolute;left:61.00px;top:260.80px" width="8.0" height="7.2" viewBox="0 0 16 14.4"><path d="M8 14 L1.6 7.4 A3.7 3.7 0 0 1 8 2.6 A3.7 3.7 0 0 1 14.4 7.4 Z" fill="#4a3a3c"/></svg>
<div class="pv" style="left:45.00px;width:40px;text-align:center;top:271.30px;font-size:3.9px;line-height:5px;color:#3a2a2c">MyPlants</div>
<svg style="position:absolute;left:105.17px;top:260.80px" width="8.0" height="7.2" viewBox="0 0 16 14.4"><path d="M8 14 L1.6 7.4 A3.7 3.7 0 0 1 8 2.6 A3.7 3.7 0 0 1 14.4 7.4 Z" fill="#4a3a3c"/></svg>
<div class="pv" style="left:89.17px;width:40px;text-align:center;top:271.30px;font-size:3.9px;line-height:5px;color:#3a2a2c">Setting</div>
<div style="position:absolute;left:99.00px;top:231.50px;width:27px;height:18.6px;border-radius:5px;background:#fdd5d6;box-shadow:0.6px 1.4px 1.6px rgba(60,40,40,0.35)"></div>
<svg style="position:absolute;left:108.40px;top:236.90px" width="8" height="8" viewBox="0 0 8 8"><path d="M1.2 6.7 L6.7 1.4" stroke="#2a1618" stroke-width="1.7" stroke-linecap="butt"/></svg>
</div>
<svg style="position:absolute;left:1450px;top:526px" width="132" height="28" viewBox="1450 526 132 28" fill="none" stroke="#ced0d6" stroke-width="1.3" stroke-linejoin="round" stroke-linecap="round"><path d="M1458 544.4 H1455 Q1453.6 544.4 1453.6 543 V533.6 Q1453.6 532.2 1455 532.2 H1470.2 Q1471.6 532.2 1471.6 533.6 V536"/><path d="M1456.6 537.4 V539.4"/><path d="M1458.8 542.8 L1463.6 546.8 L1473 537.8" stroke="#3fa060" stroke-width="1.6"/><ellipse cx="1494.4" cy="542.2" rx="5.6" ry="5.6" fill="#1e1f22"/><ellipse cx="1497.2" cy="539.6" rx="5.6" ry="5.6" fill="#1e1f22"/><ellipse cx="1500" cy="537" rx="5.6" ry="5.6" fill="#1e1f22"/><path d="M1524.8 538 A5.3 5.3 0 1 1 1534.2 535.2"/><path d="M1529 546.4 V535.2 Q1529 533.6 1530.4 533.6 Q1531.8 533.6 1531.8 535.2 V540 L1537.6 541.2 Q1539.6 541.8 1539.4 543.8 L1538.8 547.4 Q1538.2 550.6 1535.4 550.6 H1531.6 Q1529.6 550.6 1528.2 548.8 L1524.4 544.4 Q1523.8 543.2 1525 542.8 Q1526 542.6 1526.8 543.4 Z"/><path d="M1534.6 540.8 V543 M1537 541.4 V543.4" stroke-width="1"/><path d="M1567 547.2 H1562 Q1560.4 547.2 1560.4 545.6 V534 Q1560.4 532.4 1562 532.4 H1568.6 Q1570.2 532.4 1570.2 534 V539"/><path d="M1564 535 H1566.4"/><path d="M1568.4 540.6 L1576.6 545.2 L1568.4 549.8 Z" stroke="#4f9e5c" fill="#22402a"/></svg>
</div>
</body></html>
